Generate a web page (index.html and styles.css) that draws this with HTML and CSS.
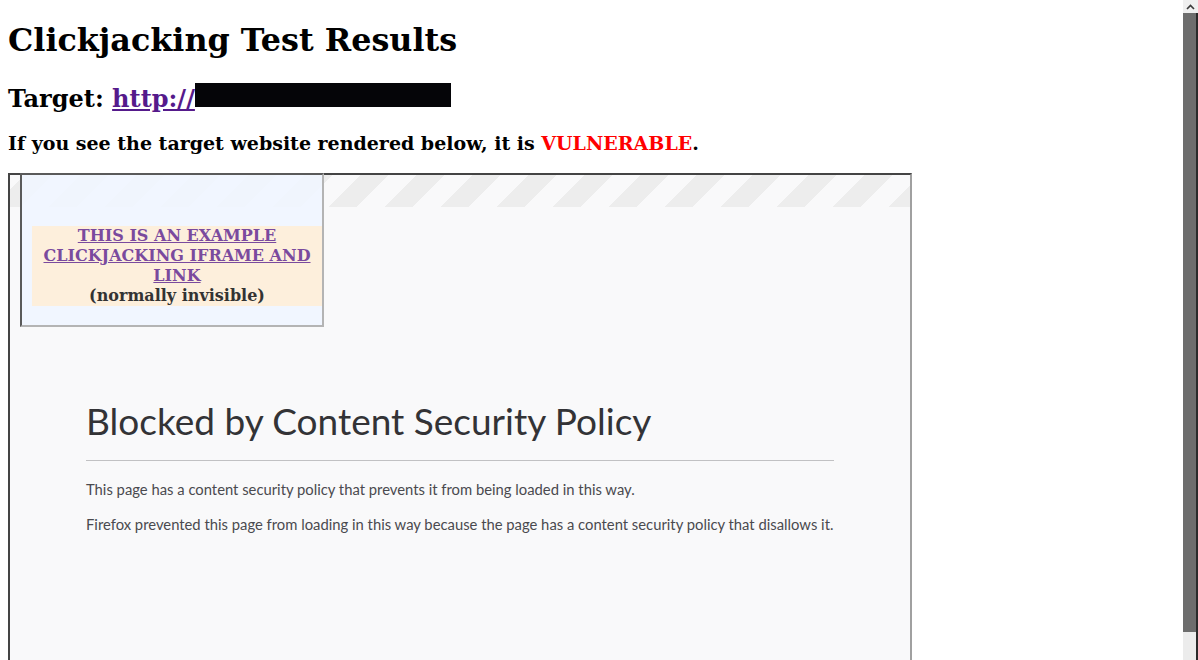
FILE: index.html
```html
<!DOCTYPE html>
<html>
<head>
<meta charset="utf-8">
<title>Clickjacking Test Results</title>
<link rel="stylesheet" href="styles.css">
</head>
<body>
<div class="window">
  <main class="page">
    <h1 class="title">Clickjacking Test Results</h1>
    <h2 class="target">Target: <a class="target-link" href="#">http://</a><span class="redact"></span></h2>
    <h3 class="notice">If you see the target website rendered below, it is <span class="vuln">VULNERABLE</span>.</h3>
    <div class="stage">
      <div class="frame">
        <div class="stripes"></div>
        <div class="blocked">
          <h1 class="blocked-title">Blocked by Content Security Policy</h1>
          <p class="blocked-text">This page has a content security policy that prevents it from being loaded in this way.</p>
          <p class="blocked-text">Firefox prevented this page from loading in this way because the page has a content security policy that disallows it.</p>
        </div>
      </div>
      <div class="decoy">
        <div class="decoy-inner">
          <a class="decoy-link" href="#">THIS IS AN EXAMPLE CLICKJACKING IFRAME AND LINK</a><br>(normally invisible)
        </div>
      </div>
    </div>
  </main>
  <div class="scrollbar">
    <div class="sb-up">
      <svg width="9" height="6" viewBox="0 0 9 6"><path d="M1 5 L4.5 1.5 L8 5" fill="none" stroke="#3a3a3a" stroke-width="1.6"/></svg>
    </div>
    <div class="sb-thumb"></div>
    <div class="sb-track"></div>
  </div>
</div>
</body>
</html>
```
FILE: styles.css
```css
html, body {
  margin: 0;
  padding: 0;
  background: #ffffff;
  overflow: hidden;
}

.window {
  display: flex;
  height: 660px;
  overflow: hidden;
}

.page {
  flex: 1;
  padding: 0 8px;
  font-family: "DejaVu Serif", serif;
  color: #000;
  overflow: hidden;
}

.title {
  font-size: 31.8px;
  font-weight: bold;
  margin: 21.44px 0;
}

.target {
  font-size: 24px;
  font-weight: bold;
  margin: 21.92px 0 17.92px;
  padding-top: 3px;
}

.target-link {
  color: #551a8b;
  text-decoration: underline;
}

.redact {
  display: inline-block;
  width: 256px;
  height: 24px;
  background: #050508;
  vertical-align: baseline;
}

.notice {
  font-size: 19px;
  font-weight: bold;
  margin: 19px 0;
}

.vuln {
  color: #ff0000;
}

.stage {
  position: relative;
  width: 904px;
}

.frame {
  width: 900px;
  height: 600px;
  border-style: solid;
  border-width: 2px;
  border-color: #444444 #a0a0a0 #a0a0a0 #444444;
  background: #f9f9fa;
  font-family: "Lato", sans-serif;
}

.stripes {
  height: 32px;
  background: repeating-linear-gradient(135deg, #f9f9fa 0 9.9px, #ededed 9.9px 29.7px, #f9f9fa 29.7px 39.6px);
}

.blocked {
  width: 748px;
  margin: 0 auto;
  padding-top: 188px;
}

.blocked-title {
  font-family: "Lato", sans-serif;
  font-weight: 400;
  font-size: 37px;
  color: #333336;
  margin: 0;
  line-height: 52px;
  padding-bottom: 13px;
  border-bottom: 1px solid #c1c1c3;
}

.blocked-text {
  font-size: 14.8px;
  color: #4a4a4f;
  margin: 0;
  line-height: 20px;
  margin-top: 18px;
  white-space: nowrap;
}

.blocked-text + .blocked-text {
  margin-top: 15px;
}

.decoy {
  position: absolute;
  top: 0;
  left: 12px;
  border-style: solid;
  border-width: 2px;
  border-color: #5a5a5a #b4b4b4 #b4b4b4 #5a5a5a;
  background: rgba(240, 246, 255, 0.85);
  padding: 51px 0 0 10px;
  box-sizing: border-box;
  width: 304px;
  height: 154px;
}

.decoy-inner {
  background: #fdefdc;
  text-align: center;
  font-weight: bold;
  font-size: 16px;
  line-height: 20px;
  color: #333333;
}

.decoy-link {
  color: #7a4a9e;
  text-decoration: underline;
}

.scrollbar {
  width: 15px;
  flex: none;
  display: flex;
  flex-direction: column;
  background: #ececec;
}

.sb-up {
  height: 13px;
  display: flex;
  align-items: center;
  justify-content: center;
  background: #efefef;
}

.sb-thumb {
  height: 619px;
  background: #6d6d6d;
  border-right: 2px solid #2a2a2a;
}

.sb-track {
  flex: 1;
  border-right: 2px solid #2a2a2a;
  background: #ececec;
}
```
